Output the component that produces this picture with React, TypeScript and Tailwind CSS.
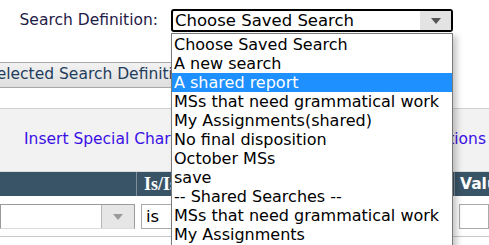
import { useState } from "react";

const savedSearches = [
  "Choose Saved Search",
  "A new search",
  "A shared report",
  "MSs that need grammatical work",
  "My Assignments(shared)",
  "No final disposition",
  "October MSs",
  "save",
  "-- Shared Searches --",
  "MSs that need grammatical work",
  "My Assignments",
];

function Arrow({ color = "#555" }: { color?: string }) {
  return (
    <svg width="10" height="6" viewBox="0 0 10 6">
      <path d="M0 0 L10 0 L5 6 Z" fill={color} />
    </svg>
  );
}

export default function App() {
  const [hovered] = useState(2);

  return (
    <div
      className="relative w-[489px] h-[245px] overflow-hidden bg-white"
      style={{ fontFamily: '"DejaVu Sans", Verdana, sans-serif' }}
    >
      {/* Search definition row */}
      <div className="flex items-center h-[40px] pt-[1px]">
        <div className="w-[171px] pr-[13px] text-right text-[15.5px] text-[#1f2047] whitespace-nowrap">
          Search Definition:
        </div>
        <div className="flex w-[282px] h-[23px] border-2 border-black rounded-[3px] bg-white">
          <div className="flex-1 pl-[2px] text-[16.5px] leading-[19px] text-black whitespace-nowrap overflow-hidden">
            Choose Saved Search
          </div>
          <div className="w-[31px] flex items-center justify-center bg-[#e3e3e3]">
            <Arrow />
          </div>
        </div>
      </div>

      {/* Buttons */}
      <div className="flex items-center mt-[22px] h-[26px] -ml-[56px]">
        <button className="h-[26px] px-[8px] border border-[#a9a9a9] rounded-[3px] bg-gradient-to-b from-[#f2f2f2] to-[#dedede] text-[15.5px] text-[#1e3d5c] whitespace-nowrap">
          Use Selected Search Definition
        </button>
        <button className="ml-[8px] h-[26px] px-[8px] border border-[#a9a9a9] rounded-[3px] bg-gradient-to-b from-[#f2f2f2] to-[#dedede] text-[15.5px] text-[#1e3d5c] whitespace-nowrap">
          Delete Search Definition
        </button>
      </div>

      {/* Special characters panel */}
      <div className="mt-[20px] border-t border-[#cfcfcf] bg-[#f2f2f2] h-[64px] flex items-center justify-between pl-[24px] pr-[3px] border-b border-b-[#dcdcdc]">
        <a className="text-[15.5px] text-[#3a10e5] whitespace-nowrap">Insert Special Characters</a>
        <a className="text-[15.5px] text-[#3a10e5] whitespace-nowrap">Options</a>
      </div>

      {/* Criteria table */}
      <div className="grid grid-cols-[137px_318px_1fr] h-[24px] bg-[#3a5467] text-white">
        <div className="border-r border-[#7f8f9a]" />
        <div
          className="border-r border-[#7f8f9a] pl-[7px] text-[18px] font-bold leading-[24px] whitespace-nowrap"
          style={{ fontFamily: '"Liberation Serif", "DejaVu Serif", serif' }}
        >
          Is/Is Not
        </div>
        <div className="pl-[5px] text-[15.5px] font-bold leading-[24px] whitespace-nowrap">Value</div>
      </div>
      <div className="grid grid-cols-[137px_318px_1fr] h-[41px] border-b border-[#c8c8c8] pt-[8px]">
        <div className="pr-[2px]">
          <div className="flex h-[25px] border border-[#9a9a9a] border-b-[#dcdcdc] bg-white">
            <div className="flex-1" />
            <div className="w-[33px] flex items-center justify-center bg-[#e6e6e6] border-l border-[#b5b5b5]">
              <Arrow color="#9a9a9a" />
            </div>
          </div>
        </div>
        <div className="pl-[4px]">
          <div className="w-[120px] h-[25px] border border-[#a9a9a9] pl-[4px] text-[16.5px] leading-[23px] text-black">
            is
          </div>
        </div>
        <div className="pl-[4px]">
          <div className="h-[25px] border border-[#a9a9a9] bg-white" />
        </div>
      </div>

      {/* Open dropdown list */}
      <div className="absolute left-[171px] top-[33px] w-[282px] h-[230px] pt-[1px] border border-[#7a7a7a] bg-white shadow-[4px_3px_6px_rgba(0,0,0,0.22)]">
        {savedSearches.map((s, i) => (
          <div
            key={i}
            className={`h-[19px] pl-[2px] text-[16px] leading-[20px] whitespace-nowrap ${
              i === hovered ? "bg-[#1e90ff] text-white" : "text-black"
            }`}
          >
            {s}
          </div>
        ))}
      </div>
    </div>
  );
}
